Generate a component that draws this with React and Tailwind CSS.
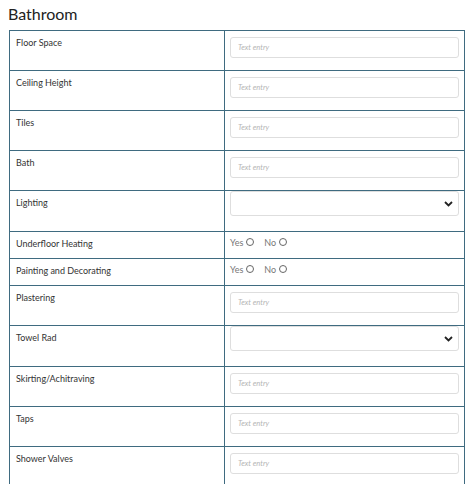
import React from 'react';

const rows = [
  { label: 'Floor Space', type: 'text' },
  { label: 'Ceiling Height', type: 'text' },
  { label: 'Tiles', type: 'text' },
  { label: 'Bath', type: 'text' },
  { label: 'Lighting', type: 'select' },
  { label: 'Underfloor Heating', type: 'radio' },
  { label: 'Painting and Decorating', type: 'radio' },
  { label: 'Plastering', type: 'text' },
  { label: 'Towel Rad', type: 'select' },
  { label: 'Skirting/Achitraving', type: 'text' },
  { label: 'Taps', type: 'text' },
  { label: 'Shower Valves', type: 'text' },
];

function Radio({ text }) {
  return (
    <span className="inline-flex items-start mr-[10px]">
      <span className="text-[9px] text-[#777] leading-[12px]">{text}</span>
      <span className="ml-[3px] mt-[1px] w-[8px] h-[8px] rounded-full border border-[#666] bg-white" />
    </span>
  );
}

function Field({ type }) {
  if (type === 'text') {
    return (
      <div className="pt-[6px]">
        <div className="h-[21px] border border-[#dedede] rounded-[3px] bg-white flex items-center pl-[7px]">
          <span className="italic text-[7.5px] text-[#b5b5b5]">Text entry</span>
        </div>
      </div>
    );
  }
  if (type === 'select') {
    return (
      <div className="h-full flex items-center">
        <div className="w-full h-[25px] border border-[#dedede] rounded-[3px] bg-white flex items-center justify-end pr-[5px]">
          <svg width="9" height="6" viewBox="0 0 9 6">
            <path d="M1 1l3.5 3.5L8 1" fill="none" stroke="#222" strokeWidth="1.8" />
          </svg>
        </div>
      </div>
    );
  }
  return (
    <div className="pt-[5px] flex">
      <Radio text="Yes" />
      <Radio text="No" />
    </div>
  );
}

export default function App() {
  const heights = { text: 'h-[40px]', select: 'h-[41px]', radio: 'h-[27px]' };
  return (
    <div className="bg-white min-h-[484px] overflow-hidden" style={{ fontFamily: 'Lato, "Noto Sans", sans-serif' }}>
      <h1 className="pl-[8px] pt-[4px] mb-[6px] text-[16px] leading-[20px] text-[#222]">Bathroom</h1>
      <table className="ml-[9px] w-[456px] border-collapse table-fixed">
        <colgroup>
          <col className="w-[215px]" />
          <col />
        </colgroup>
        <tbody>
          {rows.map((r) => (
            <tr key={r.label} className={heights[r.type]}>
              <td className="border border-[#3f6b80] align-top pl-[6px] pt-[6px] text-[9px] leading-[12px] text-[#333]">
                {r.label}
              </td>
              <td className="border border-[#3f6b80] align-top px-[5px]">
                <Field type={r.type} />
              </td>
            </tr>
          ))}
        </tbody>
      </table>
    </div>
  );
}
